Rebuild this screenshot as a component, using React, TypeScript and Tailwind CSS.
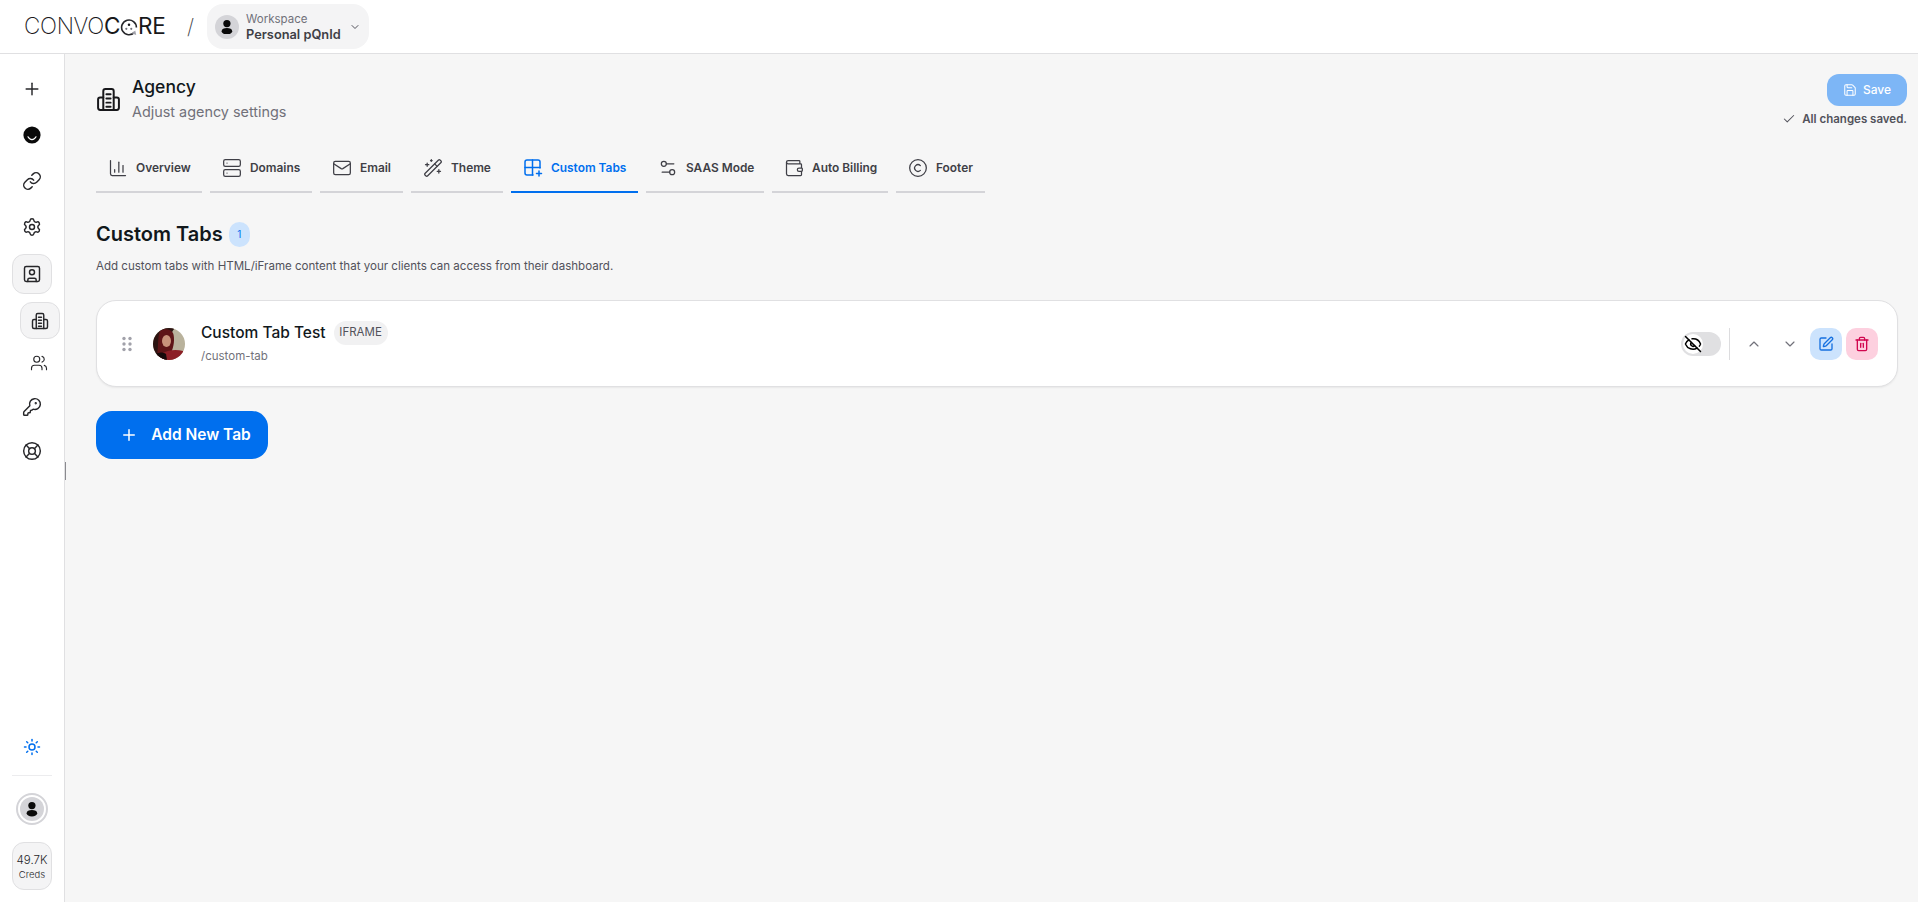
import {
  ChartColumn,
  ChevronDown,
  ChevronUp,
  Check,
  Copyright,
  EyeOff,
  KeyRound,
  LifeBuoy,
  Link,
  Mail,
  Plus,
  Save,
  Server,
  Settings,
  Settings2,
  SquarePen,
  SquareUser,
  Sun,
  Trash2,
  Users,
  Wallet,
  WandSparkles,
} from "lucide-react";
import type { ReactNode } from "react";

function AgencyIcon({ className }: { className?: string }) {
  return (
    <svg viewBox="0 0 24 24" fill="none" stroke="currentColor" strokeWidth="1.9" strokeLinecap="round" strokeLinejoin="round" className={className}>
      <path d="M7 22V4a2 2 0 0 1 2-2h6a2 2 0 0 1 2 2v18" />
      <path d="M7 10H4a2 2 0 0 0-2 2v8a2 2 0 0 0 2 2h16a2 2 0 0 0 2-2v-8a2 2 0 0 0-2-2h-3" />
      <path d="M10 7h4M10 11h4M10 15h4M10 19h4" />
    </svg>
  );
}

function SmileIcon() {
  return (
    <svg viewBox="0 0 18 18" className="h-[18px] w-[18px]">
      <circle cx="9" cy="9" r="8.6" fill="#0a0a0a" />
      <path d="M5 10.800c1 2 2.400 2.800 4 2.800s3-.8 4-2.800" fill="none" stroke="#fff" strokeWidth="1.2" strokeLinecap="round" />
    </svg>
  );
}

function CustomTabsIcon() {
  return (
    <svg viewBox="0 0 20 20" fill="none" stroke="currentColor" strokeWidth="1.5" strokeLinecap="round" strokeLinejoin="round" className="h-5 w-5">
      <path d="M10 17H4a2 2 0 0 1-2-2V4a2 2 0 0 1 2-2h11a2 2 0 0 1 2 2v6" />
      <path d="M2 9.500h15M9.500 2v15" />
      <path d="M16 13v5M13.500 15.500h5" />
    </svg>
  );
}

function GripDots() {
  return (
    <svg viewBox="0 0 10 16" className="h-4 w-[10px]" fill="#a1a1aa">
      <circle cx="2" cy="2.500" r="1.700" />
      <circle cx="8" cy="2.500" r="1.700" />
      <circle cx="2" cy="8" r="1.700" />
      <circle cx="8" cy="8" r="1.700" />
      <circle cx="2" cy="13.500" r="1.700" />
      <circle cx="8" cy="13.500" r="1.700" />
    </svg>
  );
}

function PersonAvatar({ size }: { size: string }) {
  return (
    <span className={`flex shrink-0 items-center justify-center rounded-full bg-[#d4d4d8] ${size}`}>
      <svg viewBox="0 0 24 24" className="h-[66%] w-[66%]" fill="#0a0a0a">
        <circle cx="12" cy="7" r="5.500" />
        <ellipse cx="12" cy="18.500" rx="8" ry="5" />
      </svg>
    </span>
  );
}

function PhotoAvatar() {
  return (
    <svg viewBox="0 0 32 32" className="h-8 w-8 shrink-0 rounded-full">
      <rect width="32" height="32" fill="#b9b29c" />
      <path d="M0 0h22c-3 3-5 8-5 14 0 6-3 12-5 18H0z" fill="#2c1412" />
      <path d="M7 3c4-3 11-2 13 2 2 5 1 14-2 20l-8 7H3C6 22 4 10 7 3z" fill="#5e1517" />
      <ellipse cx="13.500" cy="13" rx="4.500" ry="6" fill="#c8937a" />
      <path d="M10 25c5-3 13-4 20-2v9H8z" fill="#8c1f26" />
      <path d="M2 26c4-2 8-2 11 0l1 6H2z" fill="#160a0a" />
    </svg>
  );
}

const railIcon = "h-5 w-5 text-[#27272a]";

function RailItem({ children }: { children: ReactNode }) {
  return <div className="flex h-[46px] items-center justify-center">{children}</div>;
}

const tabs: { label: string; icon: ReactNode; width: string; active?: boolean }[] = [
  { label: "Overview", icon: <ChartColumn className="h-5 w-5" strokeWidth={1.5} />, width: "w-[106px]" },
  { label: "Domains", icon: <Server className="h-5 w-5" strokeWidth={1.5} />, width: "w-[102px]" },
  { label: "Email", icon: <Mail className="h-5 w-5" strokeWidth={1.5} />, width: "w-[83px]" },
  { label: "Theme", icon: <WandSparkles className="h-5 w-5" strokeWidth={1.5} />, width: "w-[92px]" },
  { label: "Custom Tabs", icon: <CustomTabsIcon />, width: "w-[127px]", active: true },
  { label: "SAAS Mode", icon: <Settings2 className="h-5 w-5" strokeWidth={1.5} />, width: "w-[118px]" },
  { label: "Auto Billing", icon: <Wallet className="h-5 w-5" strokeWidth={1.5} />, width: "w-[116px]" },
  { label: "Footer", icon: <Copyright className="h-5 w-5" strokeWidth={1.5} />, width: "w-[89px]" },
];

export default function App() {
  return (
    <div className="flex h-[902px] w-[1918px] flex-col overflow-hidden bg-[#f6f6f6] font-['Inter','Liberation_Sans',sans-serif] text-[#18181b]">
      {/* top bar */}
      <header className="flex h-[54px] shrink-0 items-center border-b border-[#e0e0e2] bg-white pl-6">
        <div className="flex w-[142px] items-center text-[22.500px] leading-none tracking-[-0.3px] text-[#18181b]">
          <span className="font-extralight">CONVO</span>
          <span className="font-normal">C</span>
          <svg viewBox="0 0 20 20" className="h-[18px] w-[18px] shrink-0">
            <path d="M16 16a8.200 8.200 0 1 1 2.200-5.500" fill="none" stroke="#27272a" strokeWidth="1.800" />
            <path d="M13 17l5 2-1-5z" fill="#a1a1aa" />
            <circle cx="10" cy="7.500" r="1.400" fill="#18181b" />
            <circle cx="7" cy="12" r="1.200" fill="#71717a" />
            <circle cx="12.500" cy="12" r="1.200" fill="#71717a" />
          </svg>
          <span className="font-normal">RE</span>
        </div>
        <span className="ml-[21px] text-[21px] font-extralight leading-none text-[#3f3f46]">/</span>
        <button className="ml-[13px] flex h-[45px] w-[162px] items-center rounded-2xl bg-[#f4f4f5] pl-2">
          <PersonAvatar size="h-6 w-6" />
          <span className="ml-[7px] flex flex-col items-start">
            <span className="text-[11.500px] leading-[15px] text-[#71717a]">Workspace</span>
            <span className="text-[12.800px] font-semibold leading-[15px] text-[#3f3f46]">Personal pQnId</span>
          </span>
          <ChevronDown className="ml-[8px] h-3 w-3 text-[#52525b]" />
        </button>
      </header>

      <div className="relative flex min-h-0 flex-1">
        {/* left rail */}
        <aside className="flex w-[65px] shrink-0 flex-col items-center border-r border-[#e0e0e2] bg-white pt-[12px] pb-[12px]">
          <RailItem><Plus className={railIcon} strokeWidth={1.75} /></RailItem>
          <RailItem><SmileIcon /></RailItem>
          <RailItem><Link className={railIcon} strokeWidth={1.75} /></RailItem>
          <RailItem><Settings className={railIcon} strokeWidth={1.75} /></RailItem>
          <div className="mt-1 flex h-10 w-10 items-center justify-center rounded-xl border border-[#e0e0e2] bg-[#f4f4f5]">
            <SquareUser className={railIcon} strokeWidth={1.75} />
          </div>
          <div className="mt-2 ml-[15px] flex h-[37px] w-10 items-center justify-center rounded-xl border border-[#e0e0e2] bg-[#f4f4f5]">
            <AgencyIcon className="h-[18px] w-[18px] text-[#27272a]" />
          </div>
          <div className="mt-0.5 ml-[14px] flex h-[44px] w-10 items-center justify-center">
            <Users className="h-[18px] w-[18px] text-[#27272a]" strokeWidth={1.5} />
          </div>
          <div className="flex h-[44px] items-center justify-center"><KeyRound className={railIcon} strokeWidth={1.75} /></div>
          <div className="flex h-[44px] items-center justify-center"><LifeBuoy className={railIcon} strokeWidth={1.75} /></div>

          <div className="mt-auto flex h-[38px] items-center justify-center pt-[4px]">
            <Sun className="h-[18px] w-[18px] text-[#006fee]" strokeWidth={2} />
          </div>
          <div className="mt-[11px] h-px w-10 bg-[#ececee]" />
          <div className="mt-[17px] flex h-8 w-8 items-center justify-center rounded-full border-2 border-[#d4d4d8] bg-white">
            <PersonAvatar size="h-6 w-6" />
          </div>
          <div className="mt-[17px] flex h-[48px] w-10 flex-col items-center justify-center rounded-xl border border-[#e0e0e2] bg-[#f4f4f5] pt-[2px] text-[#27272a]">
            <span className="text-[11.500px] font-light leading-[16px]">49.7K</span>
            <span className="text-[9.500px] font-light leading-[14px]">Creds</span>
          </div>
        </aside>
        {/* sidebar resize handle */}
        <span className="absolute top-[408px] left-[65px] h-[18px] w-px bg-[#8a8a8f]" />

        {/* page */}
        <main className="min-w-0 flex-1 pt-[20px] pr-[11px] pl-[31px]">
          <div className="flex justify-between">
            <div className="-mt-[2px] flex items-center">
              <AgencyIcon className="h-[25px] w-[25px] text-[#18181b]" />
              <div className="ml-[11px]">
                <h1 className="text-[17.500px] font-medium leading-[24px] text-[#11181c]">Agency</h1>
                <p className="text-[14.400px] leading-[25px] text-[#71717a]">Adjust agency settings</p>
              </div>
            </div>
            <div className="flex flex-col items-end">
              <button className="flex h-8 w-20 items-center justify-center gap-1.5 rounded-xl bg-[#7db6f6] text-[12px] font-medium text-white">
                <Save className="h-3.5 w-3.5" strokeWidth={1.75} />
                Save
              </button>
              <div className="mt-[5px] flex items-center gap-1.5 text-[11.500px] font-semibold leading-[16px] text-[#52525b]">
                <Check className="h-3.5 w-3.5" strokeWidth={1.75} />
                All changes saved.
              </div>
            </div>
          </div>

          {/* tabs */}
          <div className="mt-[19px] flex gap-2">
            {tabs.map((tab) => (
              <div
                key={tab.label}
                className={`flex h-[47px] items-center gap-2 border-b-2 pb-[2px] pl-3 ${tab.width} ${
                  tab.active ? "border-[#006fee] text-[#006fee]" : "border-[#d4d4d8] text-[#3f3f46]"
                }`}
              >
                {tab.icon}
                <span className="text-[11.900px] font-semibold">{tab.label}</span>
              </div>
            ))}
          </div>

          <div className="mt-[28px] flex items-center gap-[6px]">
            <h2 className="text-[20px] font-semibold leading-[26px] text-[#11181c]">Custom Tabs</h2>
            <span className="flex h-[25px] w-[21px] items-center justify-center rounded-full bg-[#cce3fd] text-[10px] text-[#006fee]">1</span>
          </div>
          <p className="mt-[10px] text-[11.550px] leading-[18px] text-[#52525b]">
            Add custom tabs with HTML/iFrame content that your clients can access from their dashboard.
          </p>

          {/* tab row */}
          <div className="mt-[25px] mr-[9px] flex h-[87px] items-center rounded-[20px] border border-[#e0e0e2] bg-white pr-[19px] pl-[25px] shadow-[0_1px_2px_rgba(0,0,0,0.06)]">
            <GripDots />
            <span className="ml-[21px]"><PhotoAvatar /></span>
            <div className="ml-[16px] flex flex-col">
              <div className="-mt-[2px] flex items-center gap-2">
                <span className="text-[15.500px] font-medium leading-[24px] text-[#11181c]">Custom Tab Test</span>
                <span className="flex h-6 w-[54px] items-center justify-center rounded-full bg-[#f1f1f2] text-[11.500px] text-[#52525b]">IFRAME</span>
              </div>
              <span className="mt-[3px] text-[11.500px] leading-[16px] text-[#71717a]">/custom-tab</span>
            </div>

            <div className="ml-auto flex items-center">
              <span className="flex h-6 w-10 items-center rounded-full bg-[#e0e0e2] pl-[2px]">
                <span className="flex h-5 w-5 items-center justify-center rounded-full bg-white">
                  <EyeOff className="h-[18px] w-[18px] text-black" strokeWidth={2} />
                </span>
              </span>
              <span className="ml-2 h-8 w-px bg-[#dcdcde]" />
              <span className="ml-3 flex h-8 w-6 items-center justify-center text-[#71717a]"><ChevronUp className="h-4 w-4" strokeWidth={1.75} /></span>
              <span className="ml-3 flex h-8 w-6 items-center justify-center text-[#71717a]"><ChevronDown className="h-4 w-4" strokeWidth={1.75} /></span>
              <span className="ml-2 flex h-8 w-8 items-center justify-center rounded-[10px] bg-[#cce3fd] text-[#1570e0]"><SquarePen className="h-4 w-4" strokeWidth={2} /></span>
              <span className="ml-1 flex h-8 w-8 items-center justify-center rounded-[10px] bg-[#fdd0df] text-[#d1074f]"><Trash2 className="h-4 w-4" strokeWidth={2} /></span>
            </div>
          </div>

          <button className="mt-[24px] flex h-12 w-[172px] items-center justify-center gap-[13px] rounded-2xl bg-[#006fee] pl-[7px] text-[15.500px] font-semibold text-white">
            <Plus className="h-[18px] w-[18px]" strokeWidth={2} />
            Add New Tab
          </button>
        </main>
      </div>
    </div>
  );
}
